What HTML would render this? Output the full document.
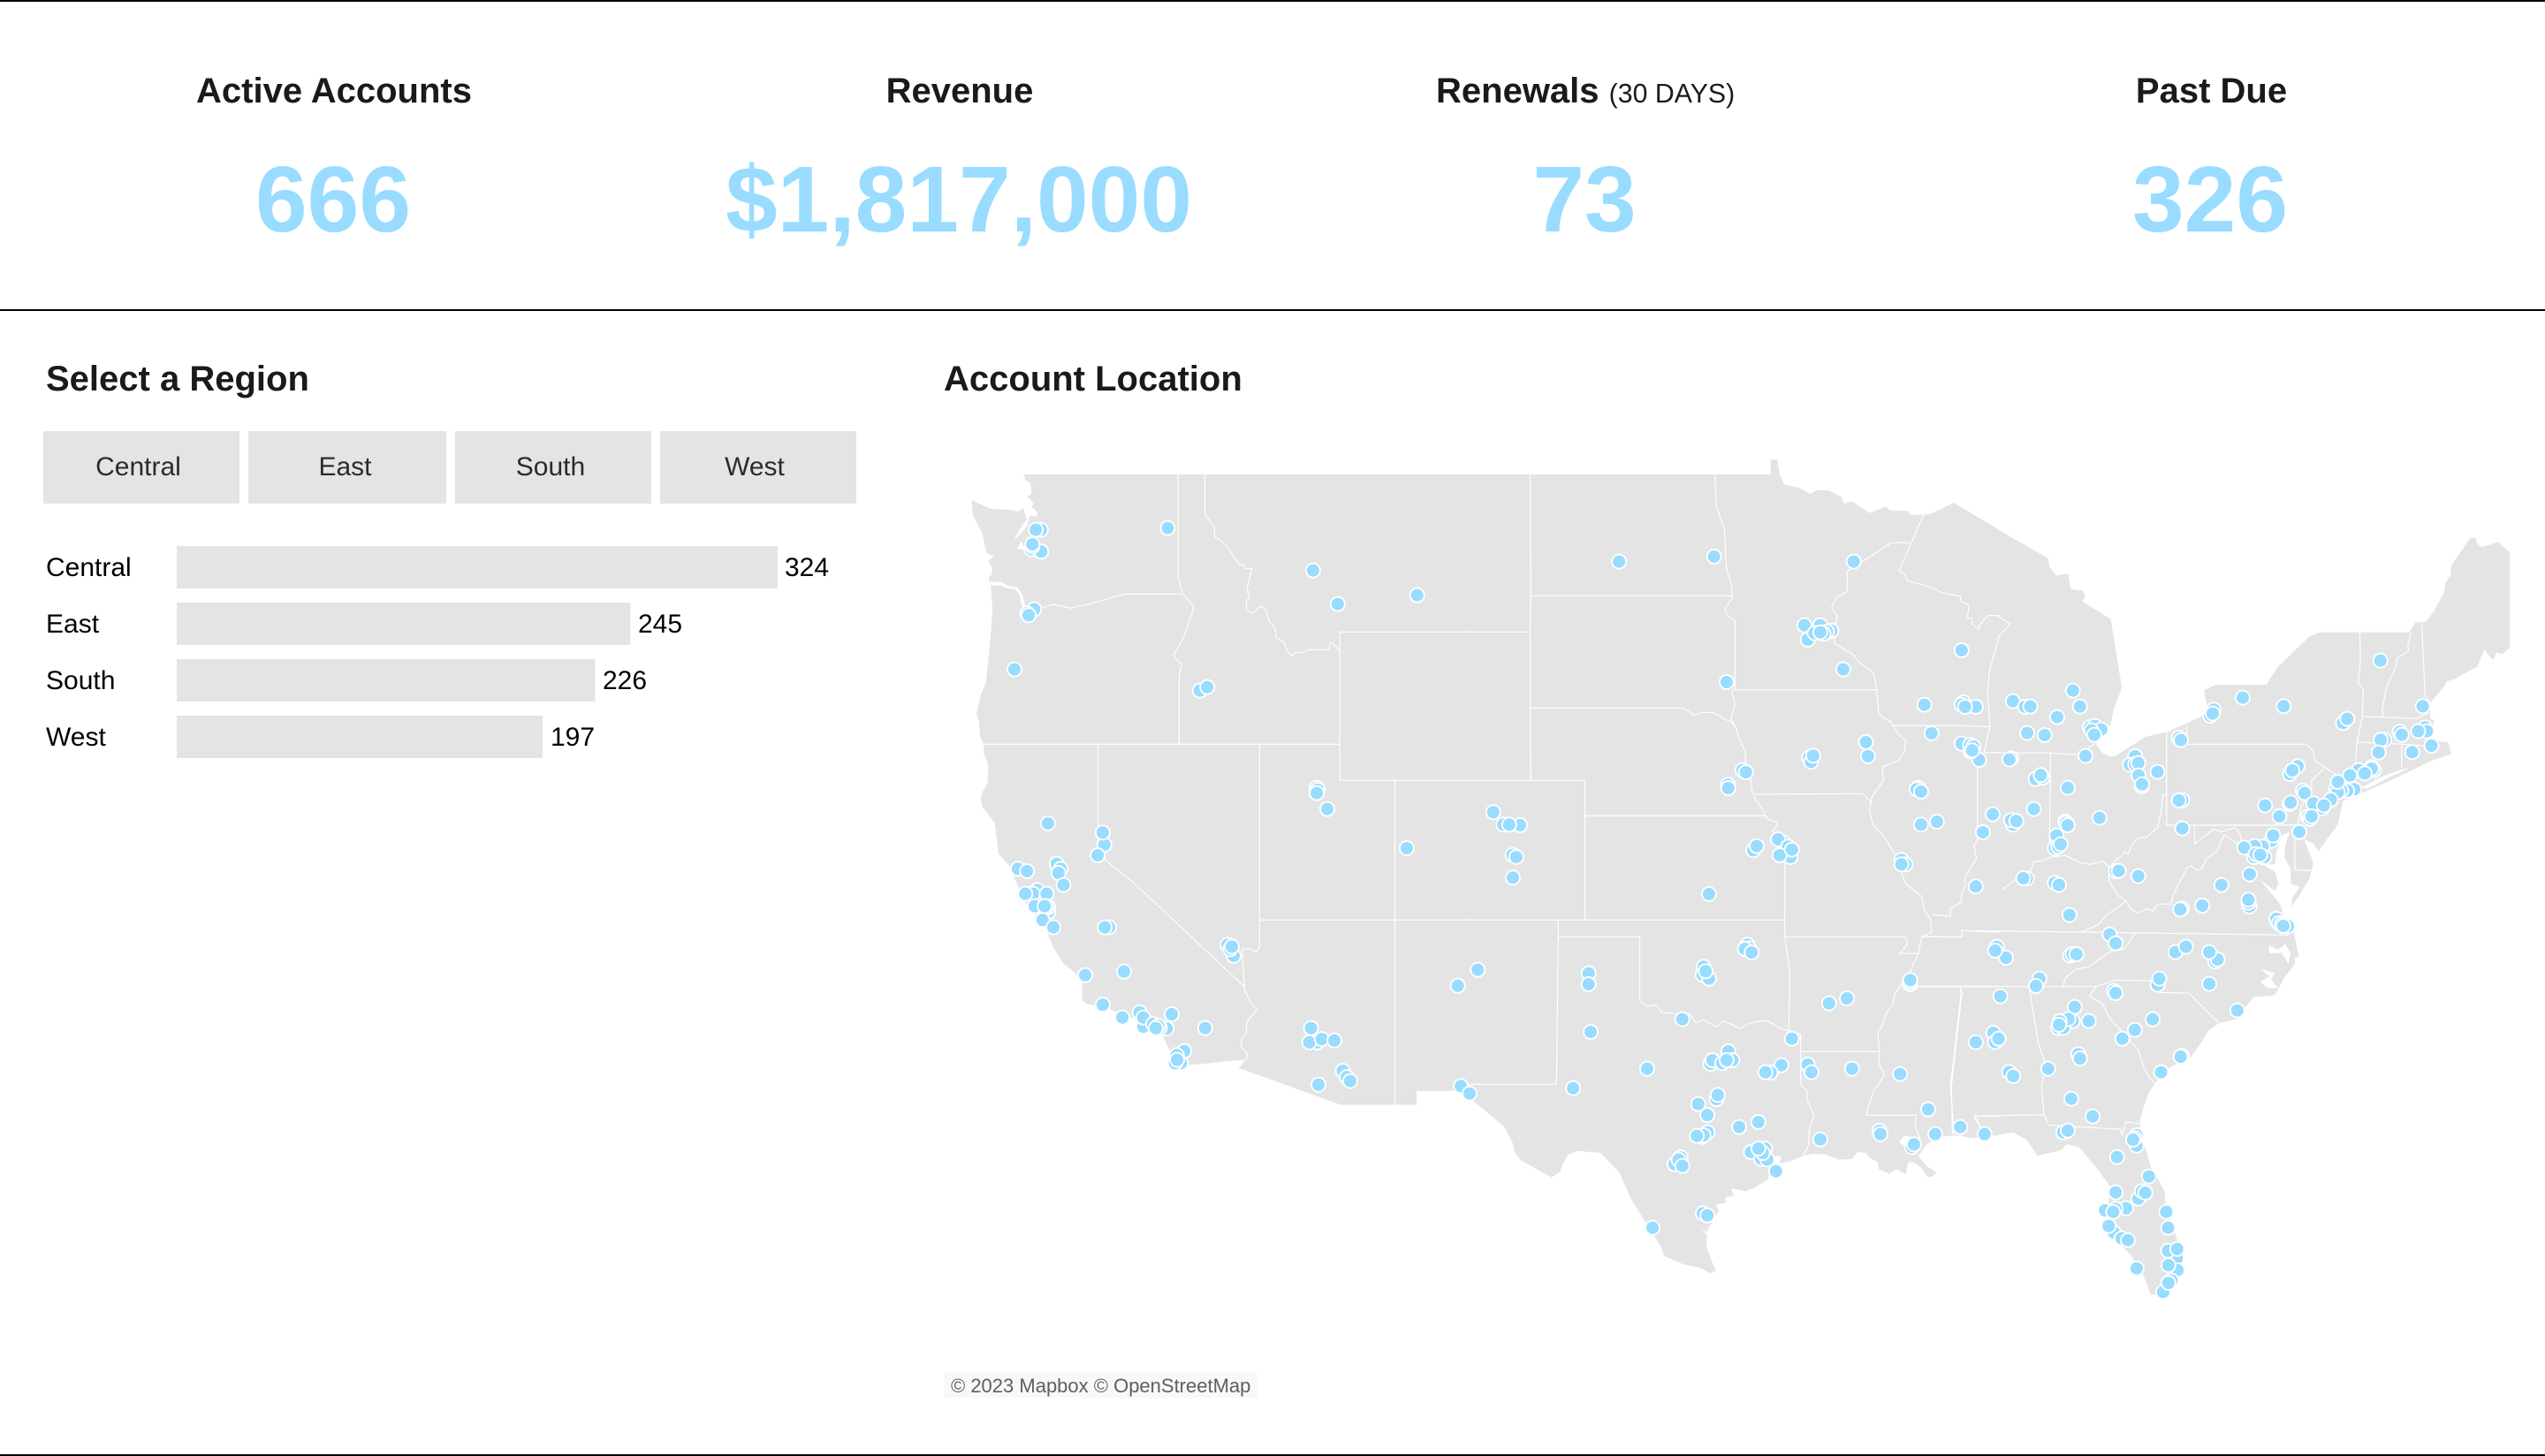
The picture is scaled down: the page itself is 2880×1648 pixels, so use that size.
<!DOCTYPE html>
<html lang="en"><head><meta charset="utf-8"><title>Accounts Dashboard</title>
<style>
html,body{margin:0;padding:0;background:#fff}
svg{display:block}
text{font-family:"Liberation Sans",Arial,sans-serif}
.h{font-size:40px;font-weight:700;fill:#1a1a1a}
.v{font-size:105.5px;font-weight:700;fill:#99dcff;text-anchor:middle}
.b{font-size:30px;fill:#2b2b2b;text-anchor:middle}
.l{font-size:30px;fill:#000}
.land polygon{fill:#e4e4e4;stroke:none}
.cut polygon{fill:#fff;stroke:none}
.ln polyline{fill:none;stroke:#fff;stroke-width:1.15;vector-effect:non-scaling-stroke;stroke-linejoin:round}
ellipse{fill:#98dcff;stroke:#fff;stroke-width:1.9;vector-effect:non-scaling-stroke}
.p ellipse{rx:20.9px;ry:24px}
.q ellipse{rx:20.9px;ry:19.4px}
.r ellipse{rx:20.2px;ry:24px}
</style></head><body>
<svg width="2880" height="1648" viewBox="0 0 2880 1648" xmlns="http://www.w3.org/2000/svg">
<rect width="2880" height="1648" fill="#fff"/>
<rect width="2880" height="2" fill="#000"/>
<rect y="350" width="2880" height="2" fill="#000"/>
<rect y="1646" width="2880" height="2" fill="#000"/>

<text class="h" x="378" y="116" text-anchor="middle">Active Accounts</text>
<text class="h" x="1086" y="116" text-anchor="middle">Revenue</text>
<text class="h" x="1625" y="116">Renewals <tspan font-size="30.3" font-weight="400">(30 DAYS)</tspan></text>
<text class="h" x="2502.5" y="116" text-anchor="middle">Past Due</text>
<text class="v" x="377" y="262">666</text>
<text class="v" x="1085" y="262">$1,817,000</text>
<text class="v" x="1793" y="262">73</text>
<text class="v" x="2501" y="262">326</text>

<text class="h" x="52" y="442">Select a Region</text>
<text class="h" x="1068" y="442">Account Location</text>

<rect x="49" y="488" width="222" height="82" fill="#e4e4e4"/>
<rect x="281" y="488" width="224" height="82" fill="#e4e4e4"/>
<rect x="515" y="488" width="222" height="82" fill="#e4e4e4"/>
<rect x="747" y="488" width="222" height="82" fill="#e4e4e4"/>
<text class="b" x="156.5" y="538">Central</text>
<text class="b" x="390.5" y="538">East</text>
<text class="b" x="623" y="538">South</text>
<text class="b" x="854" y="538">West</text>

<rect x="200" y="618" width="680" height="48" fill="#e4e4e4"/>
<rect x="200" y="682" width="513.5" height="48" fill="#e4e4e4"/>
<rect x="200" y="746" width="473.5" height="48" fill="#e4e4e4"/>
<rect x="200" y="810" width="414" height="48" fill="#e4e4e4"/>
<text class="l" x="52" y="652">Central</text>
<text class="l" x="52" y="716">East</text>
<text class="l" x="52" y="780">South</text>
<text class="l" x="52" y="844">West</text>
<text class="l" x="888" y="652">324</text>
<text class="l" x="722" y="716">245</text>
<text class="l" x="682" y="780">226</text>
<text class="l" x="623" y="844">197</text>

<!-- land -->
<g class="land">
<g transform="translate(1060,500) scale(.38265,.33333)"><polygon points="257,111 1575,111 1575,1510 240,1510 215,1440 183,1400 172,1295 135,1240 130,1210 135,1190 150,1160 153,1100 140,1060 140,1030 128,1000 125,950 118,925 130,860 145,820 152,750 160,650 165,570 160,490 155,480 155,450 160,458 165,430 152,405 170,388 147,378 135,310 125,290 107,250 103,198 160,228 225,232 240,238 256,225 266,262 245,298 228,335 238,325 268,285 275,250 295,255 298,240 280,220 287,210 268,185 280,178 278,140 263,130"/></g>
<g transform="translate(1060,1000) scale(.38265,.41327)"><polygon points="240,-10 1575,-10 1575,590 1530,568 1419,568 1419,606 1195,606 893,505 915,482 745,498 715,500 695,470 670,420 640,385 600,372 550,362 515,345 490,335 445,330 430,320 430,270 407,243 375,220 345,175 327,135 327,110 300,95 275,70 245,30"/></g>
<g transform="translate(1660,500) scale(.38265,.33333)"><polygon points="-10,111 898,111 898,60 918,62 925,110 938,145 985,157 1015,177 1035,165 1070,165 1108,187 1115,210 1140,203 1190,242 1240,220 1250,233 1305,235 1310,248 1350,248 1375,243 1440,207 1575,300 1575,1510 -10,1510"/></g>
<g transform="translate(1660,1000) scale(.38265,.33333)"><polygon points="-10,-10 1575,-10 1575,855 1556,857 1489,865 1458,855 1400,860 1360,885 1335,925 1360,960 1388,980 1375,997 1360,995 1345,965 1325,950 1305,945 1298,987 1270,970 1250,985 1218,970 1215,945 1195,935 1180,915 1155,912 1140,935 1100,938 1060,920 1020,918 995,925 950,945 925,950 930,925 912,925 890,1005 855,1030 825,1045 780,1035 790,1060 765,1065 765,1085 735,1090 745,1110 725,1150 708,1185 690,1165 710,1195 708,1230 725,1285 737,1315 720,1323 690,1305 645,1295 583,1265 575,1235 550,1190 525,1145 487,1075 450,980 395,915 325,908 300,920 285,950 275,980 250,998 160,940 140,910 135,880 110,825 20,740 0,715 -10,700"/></g>
<g transform="translate(2260,580) scale(.39541,.33333)"><polygon points="-10,50 145,155 150,185 170,215 203,207 210,260 245,265 252,280 245,303 325,362 357,595 333,670 325,720 285,770 285,790 300,815 325,830 337,828 425,762 487,745 590,690 600,655 592,605 625,585 770,585 803,525 895,420 925,407 1180,407 1197,373 1228,372 1250,335 1280,270 1283,240 1297,215 1300,180 1355,85 1370,88 1375,108 1388,118 1433,100 1467,135 1467,460 1445,482 1430,475 1420,500 1410,490 1395,465 1385,490 1375,525 1340,545 1310,565 1285,575 1280,590 1255,625 1238,650 1240,700 1250,705 1245,765 1250,775 1290,780 1300,820 1240,845 1135,905 1040,955 990,980 975,1060 950,1100 920,1150 905,1125 880,1110 885,1130 905,1190 895,1240 880,1270 860,1310 840,1340 835,1370 845,1400 862,1500 862,1510 -10,1510"/></g>
<g transform="translate(2060,1020) scale(.39541,.33333)"><polygon points="495,-10 1345,-10 1345,60 1350,110 1358,170 1358,210 1345,235 1330,255 1312,295 1300,320 1240,325 1190,400 1140,415 1110,440 1090,480 1060,530 1000,565 960,615 940,650 925,700 915,740 915,780 930,840 945,900 985,985 990,1050 1015,1130 1035,1200 1020,1270 1000,1300 982,1340 945,1335 925,1270 890,1205 870,1180 850,1150 825,1100 810,1070 825,1020 830,970 790,905 765,870 740,835 705,825 690,845 620,865 610,845 590,810 550,785 495,797"/></g>
</g>

<!-- water cut-outs -->
<g class="cut">
<g transform="translate(1060,500) scale(.38265,.33333)">
<polygon points="237,365 250,337 262,365"/>
<polygon points="155,476 190,476 212,490 237,493 252,515 262,560 252,560 245,520 232,500 210,498 190,488 155,488"/>
</g>
<g transform="translate(1660,1000) scale(.38265,.33333)">
<polygon points="1278,878 1295,855 1340,870 1330,920 1300,900"/>
</g>
<g transform="translate(2260,580) scale(.39541,.33333)">
<polygon points="815,1095 838,1085 825,1130 822,1170 840,1210 840,1260 865,1272 845,1310 838,1370 845,1400 825,1385 810,1330 775,1280 750,1245 795,1285 805,1260 795,1220 760,1195 795,1195 800,1150"/>
<polygon points="1040,935 1105,895 1165,870 1180,868 1130,895 1060,938"/>
</g>
<g transform="translate(2060,1020) scale(.39541,.33333)">
<polygon points="1283,150 1310,165 1330,145 1345,175 1340,215 1320,175 1285,178"/>
<polygon points="1260,230 1300,245 1290,265 1310,295 1280,295 1258,275 1285,255"/>
</g>
</g>

<!-- state lines -->
<g class="ln">
<g transform="translate(1060,500) scale(.38265,.33333)">
<polyline points="258,560 310,565 345,552 395,565 450,552 520,528 560,517 727,517"/>
<polyline points="714,111 714,460 727,517 758,555 760,565 730,665 702,722 708,740 725,752 717,795 717,1027"/>
<polyline points="793,111 793,248 820,287 823,322 855,350 895,417 908,418 912,430 932,430 918,495 925,530 916,540 916,573 933,583 958,558 973,570 982,607 1002,637 1003,665 1027,680 1037,712 1050,727 1063,714 1085,716 1098,706 1160,706 1163,684 1170,682 1192,710"/>
<polyline points="140,1027 1192,1027"/>
<polyline points="1575,646 1192,646 1192,1150 1575,1150"/>
<polyline points="477,1027 477,1400 585,1500"/>
<polyline points="955,1027 955,1510"/>
<polyline points="1355,1150 1355,1510"/>
</g>
<g transform="translate(1060,1000) scale(.38265,.41327)">
<polyline points="585,0 910,283 910,290 932,332 947,345 918,378 915,410 902,425 900,447 920,468 915,482"/>
<polyline points="955,0 955,175 945,187 920,178 903,182 910,283"/>
<polyline points="955,100 1575,100"/>
<polyline points="1355,0 1355,606"/>
</g>
<g transform="translate(1660,500) scale(.38265,.33333)">
<polyline points="187,111 189,523 187,646 187,904 189,1150"/>
<polyline points="-10,646 187,646"/>
<polyline points="189,523 783,523"/>
<polyline points="-10,1150 349,1150 349,1510"/>
<polyline points="349,1270 882,1270"/>
<polyline points="187,904 640,904 672,928 695,918 728,920 785,955 798,975 803,1005 823,1050 825,1100 840,1150 842,1180 855,1220 875,1250 882,1270 895,1285 917,1290 918,1300 905,1320 920,1340 940,1410 940,1510"/>
<polyline points="733,111 738,220 762,300 767,430 783,490 785,530 762,568 775,595 793,607 793,840"/>
<polyline points="793,840 783,845 793,895 780,940 798,975"/>
<polyline points="793,842 1212,842"/>
<polyline points="1310,343 1255,343 1170,407 1125,440 1125,507 1092,530 1078,565 1095,590 1088,630 1088,685 1145,725 1163,752 1203,785 1212,842 1218,920 1225,932 1255,953 1270,985 1297,1015 1295,1050 1275,1083 1228,1105 1232,1150 1198,1205 1190,1255 1203,1305 1237,1345 1265,1400 1285,1460 1297,1500"/>
<polyline points="850,1197 1170,1195 1198,1225"/>
<polyline points="1258,964 1460,964 1547,968"/>
<polyline points="1510,1090 1510,1350 1500,1370 1507,1415 1475,1475 1470,1500"/>
<polyline points="1530,1055 1575,1055"/>
<polyline points="1350,248 1278,440 1295,450 1302,472 1375,495 1405,513 1460,525 1460,540 1485,555 1480,598 1493,600 1495,620 1515,638 1515,625 1540,590 1575,590"/>
<polyline points="1568,685 1545,780 1540,850 1547,965 1530,1055"/>
</g>
<g transform="translate(1660,1000) scale(.38265,.33333)">
<polyline points="-10,124 940,124"/>
<polyline points="349,-5 349,124"/>
<polyline points="270,124 270,181 265,682 0,682"/>
<polyline points="270,181 511,181 511,398 535,418 560,412 575,437 620,442 660,445 678,473 700,463 738,487 755,468 780,477 805,493 835,475 865,467 890,467 930,493 955,500 987,512 987,682 1005,705 1005,735 1027,785 1013,830 1010,890 995,925"/>
<polyline points="940,-5 940,181 955,300 952,500"/>
<polyline points="940,181 1297,181 1303,205 1280,238 1335,238"/>
<polyline points="987,571 1218,571"/>
<polyline points="1297,0 1345,45 1352,90 1370,120 1375,165 1345,181 1335,238 1310,300 1265,375 1260,410 1240,440 1225,490 1215,500 1220,570 1218,610 1235,650 1205,700 1190,750 1180,787 1330,787 1325,825 1340,865"/>
<polyline points="1310,349 1575,349"/>
<polyline points="1345,181 1465,181 1463,160 1575,165"/>
<polyline points="1457,349 1462,370 1430,690 1437,790 1440,855"/>
<polyline points="1500,790 1575,790"/>
<polyline points="1500,790 1515,815 1520,860"/>
<polyline points="1375,105 1430,112 1430,85 1460,65 1465,30 1478,0"/>
</g>
<g transform="translate(2260,580) scale(.39541,.33333)">
<polyline points="0,350 38,378 5,420 0,445"/>
<polyline points="0,817 153,817 232,823 280,785"/>
<polyline points="153,817 150,1130"/>
<polyline points="15,1280 55,1245 90,1240 105,1185 125,1185 155,1170 195,1165 240,1190 265,1195 305,1185 320,1205 345,1175 355,1170 365,1150 375,1160 385,1130 405,1105 425,1105 460,1070 470,1010 475,960 485,955"/>
<polyline points="485,745 485,1062 860,1062"/>
<polyline points="543,725 543,787 885,787 905,810 910,845 970,890"/>
<polyline points="935,870 900,910 900,940 870,1000 860,1062"/>
<polyline points="565,1062 565,1125 620,1075 640,1085 680,1070 695,1090 700,1120"/>
<polyline points="320,1205 320,1250 345,1300 370,1320 385,1350 405,1360 430,1345 445,1355 460,1330 497,1330 505,1295 545,1205 555,1200 570,1215 585,1210 600,1175 630,1150 650,1095 695,1130 760,1200"/>
<polyline points="240,1425 290,1400 310,1370 370,1320"/>
<polyline points="1038,407 1040,500 1033,580 1048,600 1045,695 1030,780 1025,860"/>
<polyline points="1185,407 1175,450 1178,470 1145,495 1140,530 1115,590 1102,670 1105,695"/>
<polyline points="1215,372 1222,550 1225,620 1240,650"/>
<polyline points="1045,693 1105,695 1200,700 1235,680"/>
<polyline points="1030,780 1158,787 1245,795"/>
<polyline points="1158,787 1158,868"/>
<polyline points="852,1100 852,1215 905,1215"/>
</g>
<g transform="translate(2060,1020) scale(.39541,.33333)">
<polyline points="290,120 405,122 405,100 750,105 1340,115"/>
<polyline points="240,290 790,290"/>
<polyline points="400,290 405,310 375,630 378,790"/>
<polyline points="597,290 625,490 645,555 633,630 640,725 652,755"/>
<polyline points="440,730 640,725"/>
<polyline points="440,730 445,745 462,770"/>
<polyline points="652,760 860,775 863,795 875,750 915,755"/>
<polyline points="695,290 700,262 730,232 770,222 800,195 830,170 870,163 900,110"/>
<polyline points="790,290 840,268 945,270 970,310 1055,313 1140,413"/>
<polyline points="770,322 790,290"/>
<polyline points="770,322 808,350 830,400 865,445 910,505 925,565 945,605 960,620"/>
</g>
</g>

<!-- account dots -->
<g class="p" transform="translate(1060,500) scale(.38265,.33333)">
<ellipse cx="308" cy="299"/><ellipse cx="293" cy="299"/><ellipse cx="683" cy="293"/><ellipse cx="280" cy="365"/><ellipse cx="309" cy="373"/><ellipse cx="283" cy="355"/><ellipse cx="283" cy="348"/><ellipse cx="1113" cy="437"/><ellipse cx="1186" cy="551"/><ellipse cx="1421" cy="521"/><ellipse cx="288" cy="569"/><ellipse cx="268" cy="583"/><ellipse cx="272" cy="589"/><ellipse cx="230" cy="773"/><ellipse cx="778" cy="845"/><ellipse cx="800" cy="833"/><ellipse cx="1123" cy="1175"/><ellipse cx="1127" cy="1182"/><ellipse cx="1124" cy="1193"/><ellipse cx="1155" cy="1247"/><ellipse cx="1390" cy="1380"/><ellipse cx="496" cy="1368"/><ellipse cx="491" cy="1327"/><ellipse cx="476" cy="1404"/><ellipse cx="329" cy="1296"/><ellipse cx="240" cy="1450"/><ellipse cx="267" cy="1458"/><ellipse cx="355" cy="1433"/><ellipse cx="367" cy="1450"/><ellipse cx="360" cy="1464"/><ellipse cx="375" cy="1505"/>
</g>
<g class="q" transform="translate(1060,1000) scale(.38265,.41327)">
<ellipse cx="298" cy="18"/><ellipse cx="285" cy="28"/><ellipse cx="262" cy="28"/><ellipse cx="325" cy="28"/><ellipse cx="290" cy="62"/><ellipse cx="330" cy="78"/><ellipse cx="330" cy="65"/><ellipse cx="325" cy="62"/><ellipse cx="319" cy="62"/><ellipse cx="313" cy="100"/><ellipse cx="345" cy="120"/><ellipse cx="510" cy="120"/><ellipse cx="497" cy="120"/><ellipse cx="860" cy="168"/><ellipse cx="878" cy="198"/><ellipse cx="868" cy="180"/><ellipse cx="873" cy="173"/><ellipse cx="554" cy="241"/><ellipse cx="439" cy="251"/><ellipse cx="491" cy="332"/><ellipse cx="549" cy="367"/><ellipse cx="600" cy="353"/><ellipse cx="611" cy="392"/><ellipse cx="611" cy="367"/><ellipse cx="640" cy="385"/><ellipse cx="680" cy="397"/><ellipse cx="660" cy="395"/><ellipse cx="655" cy="390"/><ellipse cx="648" cy="396"/><ellipse cx="695" cy="358"/><ellipse cx="794" cy="396"/><ellipse cx="732" cy="459"/><ellipse cx="710" cy="470"/><ellipse cx="722" cy="492"/><ellipse cx="705" cy="492"/><ellipse cx="711" cy="483"/><ellipse cx="1107" cy="396"/><ellipse cx="1125" cy="435"/><ellipse cx="1102" cy="435"/><ellipse cx="1139" cy="426"/><ellipse cx="1176" cy="430"/><ellipse cx="1201" cy="513"/><ellipse cx="1213" cy="530"/><ellipse cx="1223" cy="541"/><ellipse cx="1129" cy="551"/><ellipse cx="1541" cy="280"/><ellipse cx="1550" cy="555"/>
</g>
<g class="p" transform="translate(1660,500) scale(.38265,.33333)">
<ellipse cx="450" cy="407"/><ellipse cx="731" cy="390"/><ellipse cx="1144" cy="407"/><ellipse cx="998" cy="623"/><ellipse cx="1045" cy="623"/><ellipse cx="1078" cy="642"/><ellipse cx="1065" cy="645"/><ellipse cx="1008" cy="672"/><ellipse cx="1028" cy="650"/><ellipse cx="1055" cy="652"/><ellipse cx="1045" cy="647"/><ellipse cx="768" cy="816"/><ellipse cx="1113" cy="773"/><ellipse cx="1463" cy="708"/><ellipse cx="1353" cy="893"/><ellipse cx="1468" cy="885"/><ellipse cx="1463" cy="893"/><ellipse cx="1505" cy="900"/><ellipse cx="1473" cy="900"/><ellipse cx="1374" cy="990"/><ellipse cx="1180" cy="1020"/><ellipse cx="1186" cy="1068"/><ellipse cx="1012" cy="1073"/><ellipse cx="1018" cy="1087"/><ellipse cx="1024" cy="1066"/><ellipse cx="815" cy="1115"/><ellipse cx="825" cy="1122"/><ellipse cx="772" cy="1165"/><ellipse cx="773" cy="1176"/><ellipse cx="1463" cy="1025"/><ellipse cx="1515" cy="1080"/><ellipse cx="1488" cy="1030"/><ellipse cx="1498" cy="1035"/><ellipse cx="1490" cy="1052"/><ellipse cx="1494" cy="1048"/><ellipse cx="1335" cy="1175"/><ellipse cx="1330" cy="1180"/><ellipse cx="1343" cy="1188"/><ellipse cx="1343" cy="1300"/><ellipse cx="1390" cy="1290"/><ellipse cx="1555" cy="1265"/><ellipse cx="1526" cy="1326"/><ellipse cx="78" cy="1258"/><ellipse cx="108" cy="1300"/><ellipse cx="157" cy="1302"/><ellipse cx="125" cy="1300"/><ellipse cx="135" cy="1403"/><ellipse cx="146" cy="1410"/><ellipse cx="136" cy="1480"/><ellipse cx="847" cy="1387"/><ellipse cx="857" cy="1373"/><ellipse cx="935" cy="1360"/><ellipse cx="920" cy="1350"/><ellipse cx="950" cy="1375"/><ellipse cx="957" cy="1410"/><ellipse cx="925" cy="1404"/><ellipse cx="961" cy="1385"/><ellipse cx="1285" cy="1420"/><ellipse cx="1297" cy="1435"/><ellipse cx="1285" cy="1435"/>
</g>
<g class="p" transform="translate(1660,1000) scale(.38265,.33333)">
<ellipse cx="716" cy="36"/><ellipse cx="1505" cy="10"/><ellipse cx="32" cy="293"/><ellipse cx="360" cy="305"/><ellipse cx="360" cy="342"/><ellipse cx="366" cy="504"/><ellipse cx="637" cy="461"/><ellipse cx="830" cy="208"/><ellipse cx="835" cy="220"/><ellipse cx="822" cy="222"/><ellipse cx="842" cy="234"/><ellipse cx="700" cy="283"/><ellipse cx="697" cy="310"/><ellipse cx="716" cy="323"/><ellipse cx="706" cy="298"/><ellipse cx="1311" cy="342"/><ellipse cx="1311" cy="335"/><ellipse cx="1311" cy="328"/><ellipse cx="1124" cy="390"/><ellipse cx="1071" cy="407"/><ellipse cx="961" cy="527"/><ellipse cx="314" cy="695"/><ellipse cx="533" cy="629"/><ellipse cx="773" cy="570"/><ellipse cx="785" cy="600"/><ellipse cx="720" cy="612"/><ellipse cx="726" cy="600"/><ellipse cx="755" cy="610"/><ellipse cx="768" cy="600"/><ellipse cx="930" cy="617"/><ellipse cx="898" cy="642"/><ellipse cx="883" cy="641"/><ellipse cx="1008" cy="615"/><ellipse cx="1019" cy="641"/><ellipse cx="1139" cy="629"/><ellipse cx="1281" cy="647"/><ellipse cx="738" cy="732"/><ellipse cx="742" cy="718"/><ellipse cx="684" cy="749"/><ellipse cx="711" cy="786"/><ellipse cx="712" cy="845"/><ellipse cx="695" cy="860"/><ellipse cx="700" cy="855"/><ellipse cx="680" cy="857"/><ellipse cx="805" cy="827"/><ellipse cx="862" cy="810"/><ellipse cx="1364" cy="767"/><ellipse cx="1459" cy="827"/><ellipse cx="1385" cy="851"/><ellipse cx="1531" cy="851"/><ellipse cx="1045" cy="869"/><ellipse cx="1220" cy="840"/><ellipse cx="1223" cy="851"/><ellipse cx="1316" cy="895"/><ellipse cx="1322" cy="886"/><ellipse cx="632" cy="930"/><ellipse cx="614" cy="953"/><ellipse cx="626" cy="938"/><ellipse cx="637" cy="959"/><ellipse cx="840" cy="912"/><ellipse cx="882" cy="900"/><ellipse cx="870" cy="935"/><ellipse cx="888" cy="937"/><ellipse cx="875" cy="915"/><ellipse cx="862" cy="900"/><ellipse cx="914" cy="977"/><ellipse cx="698" cy="1120"/><ellipse cx="711" cy="1127"/><ellipse cx="549" cy="1169"/><ellipse cx="8" cy="713"/><ellipse cx="1505" cy="539"/>
</g>
<g class="r" transform="translate(2260,580) scale(.39541,.33333)">
<ellipse cx="217" cy="605"/><ellipse cx="45" cy="641"/><ellipse cx="80" cy="660"/><ellipse cx="95" cy="659"/><ellipse cx="237" cy="659"/><ellipse cx="172" cy="695"/><ellipse cx="86" cy="749"/><ellipse cx="136" cy="756"/><ellipse cx="265" cy="730"/><ellipse cx="280" cy="725"/><ellipse cx="298" cy="737"/><ellipse cx="270" cy="740"/><ellipse cx="278" cy="755"/><ellipse cx="253" cy="827"/><ellipse cx="40" cy="835"/><ellipse cx="35" cy="839"/><ellipse cx="110" cy="905"/><ellipse cx="130" cy="900"/><ellipse cx="125" cy="892"/><ellipse cx="202" cy="935"/><ellipse cx="105" cy="1007"/><ellipse cx="45" cy="1060"/><ellipse cx="40" cy="1045"/><ellipse cx="55" cy="1048"/><ellipse cx="395" cy="828"/><ellipse cx="380" cy="857"/><ellipse cx="395" cy="855"/><ellipse cx="404" cy="851"/><ellipse cx="405" cy="893"/><ellipse cx="414" cy="930"/><ellipse cx="415" cy="923"/><ellipse cx="459" cy="881"/><ellipse cx="520" cy="765"/><ellipse cx="526" cy="773"/><ellipse cx="620" cy="670"/><ellipse cx="610" cy="690"/><ellipse cx="617" cy="683"/><ellipse cx="703" cy="629"/><ellipse cx="820" cy="658"/><ellipse cx="990" cy="715"/><ellipse cx="1002" cy="701"/><ellipse cx="1097" cy="503"/><ellipse cx="1218" cy="658"/><ellipse cx="1152" cy="745"/><ellipse cx="1158" cy="755"/><ellipse cx="1225" cy="730"/><ellipse cx="1230" cy="743"/><ellipse cx="1205" cy="743"/><ellipse cx="1108" cy="772"/><ellipse cx="1098" cy="772"/><ellipse cx="1243" cy="792"/><ellipse cx="1188" cy="814"/><ellipse cx="1092" cy="815"/><ellipse cx="860" cy="862"/><ellipse cx="838" cy="888"/><ellipse cx="845" cy="876"/><ellipse cx="875" cy="945"/><ellipse cx="880" cy="953"/><ellipse cx="1035" cy="875"/><ellipse cx="1010" cy="893"/><ellipse cx="1078" cy="875"/><ellipse cx="1072" cy="865"/><ellipse cx="1072" cy="870"/><ellipse cx="1052" cy="886"/><ellipse cx="1022" cy="940"/><ellipse cx="1002" cy="945"/><ellipse cx="985" cy="945"/><ellipse cx="970" cy="940"/><ellipse cx="975" cy="950"/><ellipse cx="975" cy="915"/><ellipse cx="955" cy="975"/><ellipse cx="930" cy="1005"/><ellipse cx="905" cy="988"/><ellipse cx="935" cy="995"/><ellipse cx="838" cy="990"/><ellipse cx="840" cy="985"/><ellipse cx="767" cy="995"/><ellipse cx="808" cy="1032"/><ellipse cx="530" cy="977"/><ellipse cx="520" cy="978"/><ellipse cx="530" cy="1073"/><ellipse cx="195" cy="1050"/><ellipse cx="197" cy="1055"/><ellipse cx="202" cy="1062"/><ellipse cx="293" cy="1037"/><ellipse cx="170" cy="1097"/><ellipse cx="165" cy="1140"/><ellipse cx="175" cy="1135"/><ellipse cx="182" cy="1127"/><ellipse cx="890" cy="1033"/><ellipse cx="895" cy="1040"/><ellipse cx="900" cy="1032"/><ellipse cx="865" cy="1085"/><ellipse cx="785" cy="1115"/><ellipse cx="790" cy="1097"/><ellipse cx="760" cy="1135"/><ellipse cx="737" cy="1133"/><ellipse cx="707" cy="1138"/><ellipse cx="735" cy="1170"/><ellipse cx="765" cy="1170"/><ellipse cx="740" cy="1160"/><ellipse cx="753" cy="1163"/><ellipse cx="723" cy="1229"/><ellipse cx="642" cy="1265"/><ellipse cx="340" cy="1218"/><ellipse cx="348" cy="1217"/><ellipse cx="404" cy="1235"/><ellipse cx="85" cy="1243"/><ellipse cx="75" cy="1242"/><ellipse cx="165" cy="1258"/><ellipse cx="177" cy="1265"/>
</g>
<g class="r" transform="translate(2060,1020) scale(.39541,.33333)">
<ellipse cx="713" cy="47"/><ellipse cx="1035" cy="25"/><ellipse cx="1030" cy="28"/><ellipse cx="1093" cy="15"/><ellipse cx="1228" cy="18"/><ellipse cx="1225" cy="5"/><ellipse cx="1225" cy="-5"/><ellipse cx="1305" cy="60"/><ellipse cx="1312" cy="75"/><ellipse cx="1338" cy="85"/><ellipse cx="1320" cy="80"/><ellipse cx="1325" cy="84"/><ellipse cx="828" cy="113"/><ellipse cx="845" cy="143"/><ellipse cx="505" cy="155"/><ellipse cx="531" cy="192"/><ellipse cx="500" cy="168"/><ellipse cx="715" cy="185"/><ellipse cx="722" cy="180"/><ellipse cx="733" cy="180"/><ellipse cx="627" cy="263"/><ellipse cx="617" cy="288"/><ellipse cx="1016" cy="173"/><ellipse cx="1046" cy="155"/><ellipse cx="1130" cy="205"/><ellipse cx="1137" cy="198"/><ellipse cx="1113" cy="173"/><ellipse cx="515" cy="323"/><ellipse cx="728" cy="359"/><ellipse cx="840" cy="305"/><ellipse cx="845" cy="312"/><ellipse cx="965" cy="283"/><ellipse cx="970" cy="263"/><ellipse cx="1113" cy="281"/><ellipse cx="1193" cy="371"/><ellipse cx="768" cy="407"/><ellipse cx="722" cy="407"/><ellipse cx="680" cy="430"/><ellipse cx="695" cy="430"/><ellipse cx="710" cy="400"/><ellipse cx="685" cy="408"/><ellipse cx="683" cy="420"/><ellipse cx="951" cy="401"/><ellipse cx="900" cy="437"/><ellipse cx="864" cy="467"/><ellipse cx="495" cy="447"/><ellipse cx="500" cy="478"/><ellipse cx="510" cy="467"/><ellipse cx="738" cy="520"/><ellipse cx="743" cy="534"/><ellipse cx="540" cy="580"/><ellipse cx="552" cy="594"/><ellipse cx="652" cy="569"/><ellipse cx="1035" cy="525"/><ellipse cx="1031" cy="528"/><ellipse cx="975" cy="581"/><ellipse cx="718" cy="671"/><ellipse cx="779" cy="731"/><ellipse cx="695" cy="785"/><ellipse cx="708" cy="779"/><ellipse cx="905" cy="795"/><ellipse cx="905" cy="830"/><ellipse cx="900" cy="805"/><ellipse cx="895" cy="810"/><ellipse cx="849" cy="869"/><ellipse cx="940" cy="935"/><ellipse cx="845" cy="989"/><ellipse cx="910" cy="1010"/><ellipse cx="920" cy="985"/><ellipse cx="930" cy="990"/><ellipse cx="875" cy="1043"/><ellipse cx="815" cy="1050"/><ellipse cx="845" cy="1045"/><ellipse cx="838" cy="1055"/><ellipse cx="840" cy="1125"/><ellipse cx="825" cy="1103"/><ellipse cx="862" cy="1145"/><ellipse cx="880" cy="1151"/><ellipse cx="990" cy="1055"/><ellipse cx="995" cy="1109"/><ellipse cx="1020" cy="1213"/><ellipse cx="995" cy="1187"/><ellipse cx="1021" cy="1181"/><ellipse cx="1022" cy="1253"/><ellipse cx="996" cy="1236"/><ellipse cx="981" cy="1327"/><ellipse cx="1005" cy="1288"/><ellipse cx="996" cy="1296"/><ellipse cx="905" cy="1247"/>
</g>

<rect x="1068" y="1552" width="355" height="30" rx="4" fill="#f8f8f8"/>
<text x="1076" y="1576" font-size="22" fill="#5f5f5f">© 2023 Mapbox © OpenStreetMap</text>
</svg>
</body></html>
